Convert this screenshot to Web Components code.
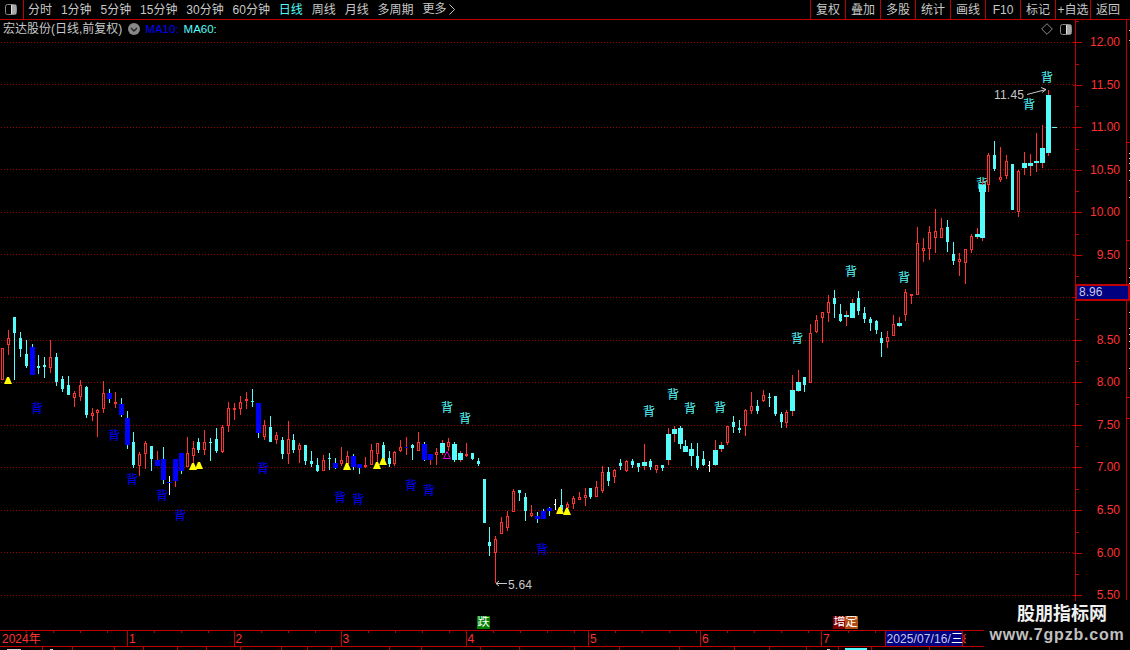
<!DOCTYPE html>
<html lang="zh">
<head>
<meta charset="utf-8">
<title>宏达股份</title>
<style>
  html, body { margin: 0; background: #000; }
  body {
    width: 1130px; height: 650px; overflow: hidden; position: relative;
    display: flex; flex-direction: column;
    font: 12px "Liberation Sans", "Noto Sans CJK SC", sans-serif;
    color: #c8c8c8;
  }
  .workspace { display: flex; height: 610px; }
</style>
</head>
<body>
<tdx-toolbar></tdx-toolbar>
<div class="workspace">
  <tdx-chart></tdx-chart>
  <price-axis></price-axis>
  <scale-strip></scale-strip>
</div>
<time-axis></time-axis>
<tab-row></tab-row>
<site-mark></site-mark>

<script>
const LINE = "#c00000";
const RED = "#ff3232";
const CYAN = "#54fcfc";
const BLUE = "#0000ff";

const panelIcon = `<svg width="12" height="11" viewBox="0 0 12 11"><rect x=".5" y=".5" width="11" height="10" rx="2" fill="#000" stroke="#8a8a8a"/><rect x="6" y="1" width="5" height="9" fill="#a8a8a8"/><rect x="6" y="1" width="1" height="9" fill="#e0e0e0"/></svg>`;

class TdxToolbar extends HTMLElement {
  constructor() {
    super();
    this.attachShadow({ mode: "open" });
  }
  connectedCallback() {
    const periods = ["分时", "1分钟", "5分钟", "15分钟", "30分钟", "60分钟", "日线", "周线", "月线", "多周期"];
    const tools = ["复权", "叠加", "多股", "统计", "画线", "F10", "标记", "+自选", "返回"];
    this.shadowRoot.innerHTML = `
      <style>
        :host { display: flex; height: 19px; border-bottom: 1px solid ${LINE}; flex: none; line-height: 21px; }
        .toggle { width: 23px; border-right: 1px solid ${LINE}; display: flex; align-items: center; justify-content: center; margin-right: 4px; }
        .toggle svg { margin-left: -1px; }
        .periods { display: flex; gap: 8.9px; }
        .on { color: ${CYAN}; }
        .more { display: flex; align-items: center; gap: 3px; }
        .tools { margin-left: auto; display: flex; margin-right: 5px; }
        .tools span { width: 34px; border-left: 1px solid ${LINE}; text-align: center; }
      </style>
      <div class="toggle">${panelIcon}</div>
      <div class="periods">
        ${periods.map((p) => `<span class="${p === "日线" ? "on" : ""}">${p}</span>`).join("")}
        <span class="more">更多<svg width="6" height="11" viewBox="0 0 6 11"><path d="M.5 .5 5.5 5.5 .5 10.5" fill="none" stroke="#c8c8c8"/></svg></span>
      </div>
      <div class="tools">${tools.map((t) => `<span>${t}</span>`).join("")}</div>`;
  }
}
customElements.define("tdx-toolbar", TdxToolbar);

// x, wick top, wick bottom, body top, body bottom, kind, wick override
// read off crops of the chart, so every block has its own offset and a 3x scale
const CANDLES = [
  [0, 310, `8 115 210 115 210 r|25 60 135 85 105 r|43 21 210 21 68 c|61 66 141 84 117 c|79 90 174 132 168 c|97 102 195 111 195 B
115 135 192 168 174 c|133 141 204 165 171 c|151 90 189 141 174 r|169 129 228 141 216 c|187 198 246 207 237 c|205 198 255 225 255 c
223 243 291 249 264 r|241 210 273 225 261 r|259 228 324 231 315 c|277 294 333 309 318 r|292 297 381 300 309 r|310 213 309 249 297 r
328 237 279 249 267 B|346 246 294 276 279 d|364 264 321 282 315 B|382 303 417 324 405 B|400 366 474 396 465 c|418 426 498 432 468 r
436 393 477 399 432 r|454 408 483 408 447 c|472 423 468 450 468 B r|490 411 522 447 510 B|508 498 555 516 519 w|526 447 531 447 513 B r
544 429 492 429 483 B|562 381 471 429 471 r|580 393 468 414 438 r|595 384 429 396 420 c|613 360 435 396 420 r|631 384 453 396 399 c
649 354 429 387 423 c|667 345 429 351 426 r|685 276 366 294 348 r|703 279 330 294 300 d|721 258 315 276 297 r|739 246 297 267 273 d
757 237 291 273 276 c|775 279 384 279 369 B|793 330 390 345 381 r`],
  [270, 390, `1 78 156 111 156 c|19 126 162 135 150 r|37 141 207 150 192 c|55 93 222 147 192 r|70 132 189 150 180 c|88 159 219 165 180 r
106 165 225 165 213 c|124 183 231 213 222 c|142 204 246 225 243 c|160 195 243 210 243 r|178 189 240 204 207 c|196 204 237 219 234 B
214 171 228 210 222 r|232 183 222 198 222 r|250 192 240 198 231 B|268 222 252 222 234 B|286 201 234 225 231 d|304 162 225 180 225 r
322 159 219 160 192 r|340 156 210 165 210 c|358 183 231 204 222 c|373 183 228 186 222 r|391 150 186 171 183 r|409 141 195 171 174 b r
427 162 210 165 174 c|445 126 183 156 183 r|463 156 213 162 210 B|481 192 225 192 210 B r|499 174 225 186 195 r|517 150 195 159 189 C r
535 144 183 156 171 r|553 156 216 162 210 C|571 183 216 189 210 C r|589 159 201 192 195 d|607 189 210 189 207 c|625 204 228 213 222 c
643 267 399 267 399 c|658 411 498 456 468 c|676 438 580 447 489 r|694 381 432 396 432 r|712 363 423 378 414 r|730 297 366 303 366 r
748 300 333 300 309 c|766 309 393 321 363 c|784 345 381 369 378 r|802 366 399 378 387 B`],
  [480, 380, `190 387 417 393 417 B|208 381 408 384 393 B|226 357 390 372 375 w|244 327 390 375 390 c|262 366 396 372 384 r|280 348 387 354 372 r
298 336 360 351 360 r|316 324 378 345 354 r|331 324 357 324 351 c|349 303 351 321 351 r|367 258 339 276 333 r|385 261 318 276 303 c
403 267 309 270 291 r|421 237 270 249 258 c|439 240 276 243 273 r|457 237 264 243 255 c|475 249 276 249 261 c|493 192 270 246 258 C r
511 237 270 243 261 c|529 255 279 255 270 r|547 255 273 255 264 c|565 144 255 162 240 C r|583 138 186 147 162 C r|601 138 207 144 192 C
616 180 216 198 216 C|634 189 258 207 228 C|652 189 270 228 264 c|670 213 258 237 255 c|688 243 276 255 258 w|706 180 258 210 255 C r
724 186 216 195 207 C r|742 138 195 138 189 r|760 108 159 126 141 c|778 120 159 144 150 c|796 87 168 90 138 r|814 36 102 78 93 r
832 60 102 78 93 c|850 30 66 45 63 r|868 39 81 51 54 c|886 48 108 48 102 c`],
  [770, 250, `34 486 534 492 516 c|49 480 534 486 519 r|67 375 498 420 483 C r|85 360 426 396 423 C r|103 381 426 381 405 c|121 222 399 249 399 r
139 195 249 210 246 r|157 186 279 186 204 r|175 135 216 156 189 r|193 120 204 144 162 c|211 162 216 192 213 c|229 183 228 195 201 C r
247 147 204 159 204 C r|265 123 195 144 183 c|283 171 219 189 207 c|301 201 243 207 219 c|319 210 252 213 240 c|334 246 321 264 279 c
352 243 294 261 276 r|370 195 258 222 258 r|388 201 231 219 228 C r|406 117 213 126 195 r|424 132 162 132 138 d`],
  [890, 60, `82 501 705 549 705 r|100 534 606 564 573 r|118 498 600 516 567 r|136 447 579 513 534 r|154 474 534 504 534 r|172 480 576 501 546 c
190 546 615 582 603 c|208 579 648 597 606 r|226 567 672 567 609 r|244 522 579 528 570 r|262 504 537 522 531 C r|277 360 543 375 534 C r
295 279 396 285 375 r|313 243 333 285 327 c|331 261 366 351 360 r|349 285 357 303 348 r|367 312 450 312 450 c|385 330 471 333 456 r
403 276 345 309 324 C r|421 282 348 309 318 C r|439 219 336 303 309 C r|457 195 324 264 309 C r|475 90 288 105 279 C r`],
];

const SIGNS = [
  [37, 409, BLUE], [114, 436, BLUE], [132, 480, BLUE], [162, 496, BLUE], [180, 516, BLUE], [263, 469, BLUE],
  [340, 498, BLUE], [358, 500, BLUE], [411, 486, BLUE], [429, 491, BLUE], [542, 550, BLUE],
  [447, 408, CYAN], [465, 419, CYAN], [649, 412, CYAN], [673, 395, CYAN], [690, 409, CYAN], [720, 408, CYAN],
  [797, 339, CYAN], [851, 272, CYAN], [904, 278, CYAN], [1047, 78, CYAN], [1029, 105, CYAN], [982, 184, CYAN],
];

const GRID_Y = [42, 84, 127, 169, 212, 254, 297, 340, 382, 425, 467, 510, 552, 595];
// apex x, top y
const TRIANGLES = [[8, 377], [193, 463], [199, 462], [347, 463], [377, 462], [383, 458], [560, 507], [567, 508]];

function candleSvg() {
  let out = "";
  const rect = (x, y, w, h, fill) => `<rect x="${x}" y="${y}" width="${w}" height="${h}" fill="${fill}"/>`;
  for (const [ox, oy, text] of CANDLES) {
    for (const item of text.replace(/\n/g, "|").split("|")) {
      const [zx, zwt, zwb, zbt, zbb, kind, wick] = item.trim().split(" ");
      const cx = Math.floor(ox + zx / 3);
      const wt = Math.round(oy + zwt / 3);
      const wb = Math.round(oy + zwb / 3);
      const bt = Math.round(oy + zbt / 3);
      const bb = Math.round(oy + zbb / 3);
      const h = Math.max(bb - bt, 1);
      let wickColor = kind === "r" || kind === "d" ? RED : kind === "w" ? "#fff" : CYAN;
      if (wick === "r") wickColor = RED;
      if (wb > wt) out += rect(cx, wt, 1, wb - wt, wickColor);
      if (kind === "r") {
        out += rect(cx - 1, bt, 3, h, RED);
        if (h > 2) out += rect(cx, bt + 1, 1, h - 2, "#000");
      } else if (kind === "d") {
        out += rect(cx - 1, bt, 3, Math.max(h, 2), RED);
      } else if (kind === "w") {
        const dashColor = ox === 0 ? BLUE : "#fff";
        out += rect(ox === 0 ? cx - 2 : cx - 1, bt, ox === 0 ? 5 : 2, 1, dashColor);
      } else {
        const fill = kind === "b" || kind === "B" ? BLUE : CYAN;
        const wide = kind === "B" || kind === "C";
        out += rect(cx - (wide ? 2 : 1), bt, wide ? 5 : 3, h, fill);
      }
    }
  }
  // head of the 背 bar, one pixel wider each side
  out += rect(979, 185, 7, 7, CYAN);
  return out;
}

class TdxChart extends HTMLElement {
  constructor() {
    super();
    this.attachShadow({ mode: "open" });
  }
  connectedCallback() {
    const grid = GRID_Y.map((y) => `<line x1="1" x2="1075" y1="${y + 0.5}" y2="${y + 0.5}" stroke="#9a0000" stroke-dasharray="1 2"/>`).join("");
    const triangles = TRIANGLES.map(([x, y]) => `<path d="M${x - 4} ${y + 7}L${x - 1} ${y}h2L${x + 4} ${y + 7}z" fill="#ffff00" shape-rendering="auto"/>`).join("");
    this.shadowRoot.innerHTML = `
      <style>
        :host { display: block; position: relative; width: 1075px; height: 610px; flex: none; overflow: hidden; }
        .legend { position: relative; z-index: 2; display: flex; align-items: center; height: 18px; padding: 0 3px; line-height: 18px; white-space: nowrap; }
        .legend .dot { margin: 0 5px 0 6px; }
        .ma { font-size: 11.5px; }
        .ma.a { color: ${BLUE}; margin-right: 5px; }
        .ma.b { color: ${CYAN}; }
        .end { margin-left: auto; display: flex; align-items: center; gap: 7px; }
        svg.plot { position: absolute; left: 0; top: 0; shape-rendering: crispEdges; }
        .sign { position: absolute; width: 14px; margin-left: -7px; margin-top: -8px; line-height: 16px; text-align: center; font-size: 12px; }
        .note { position: absolute; line-height: 14px; color: #c8c8c8; white-space: nowrap; letter-spacing: .2px; }
        .badge { position: absolute; width: 13px; height: 13px; line-height: 13px; text-align: center; font-size: 12px; color: #fff; overflow: hidden; }
      </style>
      <div class="legend">
        <span>宏达股份(日线,前复权)</span>
        <svg class="dot" width="12" height="12" viewBox="0 0 12 12"><circle cx="6" cy="6" r="6" fill="#888"/><path d="M3 5l3 3 3-3" fill="none" stroke="#222" stroke-width="1.3"/></svg>
        <span class="ma a">MA10:</span><span class="ma b">MA60:</span>
        <span class="end">
          <svg width="12" height="12" viewBox="0 0 12 12"><path d="M6 .7 11.3 6 6 11.3 .7 6z" fill="none" stroke="#8a8a8a"/></svg>
          ${panelIcon}
        </span>
      </div>
      ${SIGNS.map(([x, y, c]) => `<span class="sign" style="left:${x}px;top:${y - 20}px;color:${c}">背</span>`).join("")}
      <svg class="plot" width="1075" height="610" viewBox="0 20 1075 610">
        ${grid}
        ${candleSvg()}
        ${triangles}
        <path d="M443.5 458.5h7l-3.5-7z" fill="none" stroke="#e000e0" stroke-width="1" shape-rendering="auto"/>
        <rect x="1052" y="127" width="5" height="1" fill="${CYAN}"/>
        <g fill="none" stroke="#c8c8c8" shape-rendering="auto">
          <path d="M1027 94.5 1046 89.5M1041 87.5l5 2-4 3"/>
          <path d="M507 583.5H496M499 581l-3 2.5 3 2.5"/>
        </g>
      </svg>
      <span class="note" style="left:994px;top:68px">11.45</span>
      <span class="note" style="left:508px;top:558px">5.64</span>
      <span class="badge" style="left:477px;top:596px;background:#008000">跌</span>
      <span class="badge" style="left:833px;top:596px;background:#800000">增</span>
      <span class="badge" style="left:845px;top:596px;background:#b04c10">定</span>`;
  }
}
customElements.define("tdx-chart", TdxChart);

class PriceAxis extends HTMLElement {
  constructor() {
    super();
    this.attachShadow({ mode: "open" });
  }
  connectedCallback() {
    const rows = ["12.00", "11.50", "11.00", "10.50", "10.00", "9.50", "9.00", "8.50", "8.00", "7.50", "7.00", "6.50", "6.00", "5.50"];
    this.shadowRoot.innerHTML = `
      <style>
        :host { display: block; position: relative; width: 50px; height: 582px; flex: none; border-left: 1px solid ${LINE}; padding-top: 1px; color: ${RED}; }
        .row { position: relative; height: 42.55px; line-height: 43.5px; text-align: right; padding-right: 6px; }
        .row::before { content: ""; position: absolute; left: -3px; top: 21px; width: 9px; height: 1px; background: ${LINE}; }
        .row::after { content: ""; position: absolute; left: 0; top: 0; width: 3px; height: 1px; background: ${LINE}; }
        .now { position: absolute; left: -1px; top: 264px; width: 49px; height: 13px; line-height: 13px; padding-left: 2px; background: #000080; border: 2px solid ${LINE}; color: #c8c8e8; }
      </style>
      ${rows.map((r) => `<div class="row">${r}</div>`).join("")}
      <div class="now">8.96</div>`;
  }
}
customElements.define("price-axis", PriceAxis);

class ScaleStrip extends HTMLElement {
  constructor() {
    super();
    this.attachShadow({ mode: "open" });
  }
  connectedCallback() {
    const white = [10, 20, 133, 138, 143, 150, 160, 177, 248, 257, 263, 292, 308, 314, 321, 328, 348];
    const red = [122, 220, 377, 398];
    const ticks = white.map((y) => `<rect x="3" y="${y}" width="1" height="1" fill="#d0d0d0"/>`).join("")
      + red.map((y) => `<rect x="1" y="${y}" width="3" height="1" fill="${LINE}"/>`).join("");
    this.shadowRoot.innerHTML = `
      <style>
        :host { display: block; width: 3px; height: 580px; flex: none; border-left: 1px solid ${LINE}; }
        svg { display: block; margin-left: -1px; shape-rendering: crispEdges; }
      </style>
      <svg width="4" height="580" viewBox="0 0 4 580">${ticks}</svg>`;
  }
}
customElements.define("scale-strip", ScaleStrip);

class TimeAxis extends HTMLElement {
  constructor() {
    super();
    this.attachShadow({ mode: "open" });
  }
  connectedCallback() {
    const cells = [["2024年", 127], ["1", 106.5], ["2", 107], ["3", 125], ["4", 122.5], ["5", 112], ["6", 121], ["7", 63.5]];
    this.shadowRoot.innerHTML = `
      <style>
        :host { display: flex; height: 15px; flex: none; border-top: 1px solid ${LINE}; border-bottom: 1px solid ${LINE}; color: ${RED}; line-height: 17px; overflow: hidden; }
        .cell { box-sizing: border-box; height: 15px; border-left: 1px solid ${LINE}; padding-left: 1px; background: repeating-linear-gradient(90deg, transparent 0 26px, ${LINE} 26px 27px) 0 0 / 100% 2px no-repeat; }
        .cell:first-of-type { border-left: 0; padding-left: 2px; }
        .date { width: 78px; flex: none; box-sizing: border-box; background: #000080; border: solid ${LINE}; border-width: 0 1px; color: #c8c8e8; padding-left: 1px; white-space: nowrap; letter-spacing: .1px; }
        .date b { font-weight: normal; color: #fff; }
        .rest { flex: 1; }
        .rest span { display: inline-block; width: 3px; overflow: hidden; vertical-align: top; }
      </style>
      ${cells.map(([t, w]) => `<div class="cell" style="width:${w}px;flex:none">${t}</div>`).join("")}
      <div class="date">2025/07/16/<b>三</b></div>
      <div class="rest"><span>8</span></div>`;
  }
}
customElements.define("time-axis", TimeAxis);

class TabRow extends HTMLElement {
  constructor() {
    super();
    this.attachShadow({ mode: "open" });
  }
  connectedCallback() {
    const edges = [43, 73, 115, 144, 178, 207, 241, 282, 308, 332, 390, 422, 481, 520, 575, 620, 680, 735, 770, 807, 839, 872, 930];
    let last = 0;
    const cells = edges.map((x) => {
      const w = x - last;
      last = x;
      return `<i style="width:${w}px"></i>`;
    }).join("");
    this.shadowRoot.innerHTML = `
      <style>
        :host { display: flex; height: 3px; flex: none; overflow: hidden; }
        i { display: block; box-sizing: border-box; height: 3px; border-right: 1px solid ${LINE}; flex: none; }
        i:nth-of-type(1) { background: linear-gradient(#d0d0d0, #d0d0d0) 7px 2px / 14px 1px no-repeat; }
        i:nth-of-type(2) { background: linear-gradient(#d0d0d0, #d0d0d0) 7px 2px / 3px 1px no-repeat; }
        i:nth-of-type(21) { background: linear-gradient(#d0d0d0, #d0d0d0) 20px 2px / 3px 1px no-repeat; }
        i:nth-of-type(22) { background: linear-gradient(${CYAN}, ${CYAN}) 6px 1px / 22px 2px no-repeat; }
      </style>
      ${cells}`;
  }
}
customElements.define("tab-row", TabRow);

class SiteMark extends HTMLElement {
  constructor() {
    super();
    this.attachShadow({ mode: "open" });
  }
  connectedCallback() {
    this.shadowRoot.innerHTML = `
      <style>
        :host { position: absolute; left: 984px; top: 601px; width: 146px; height: 49px; background: #000; display: flex; flex-direction: column; align-items: center; }
        .name { margin: 3px 0 0 10px; font-size: 18px; line-height: 20px; font-weight: 700; color: #f0f0f0; }
        .url { margin-top: 2px; font-size: 16px; line-height: 18px; font-weight: 700; letter-spacing: .8px; color: #c0c0c0; }
      </style>
      <div class="name">股朋指标网</div>
      <div class="url">www.7gpzb.com</div>`;
  }
}
customElements.define("site-mark", SiteMark);
</script>
</body>
</html>
